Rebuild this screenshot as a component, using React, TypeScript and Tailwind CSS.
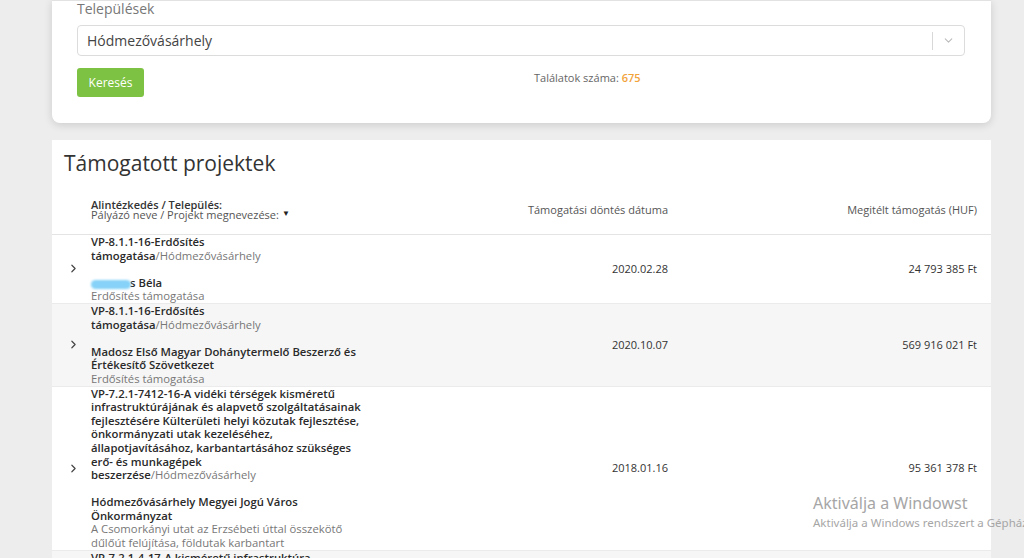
import React from 'react';
import { ChevronRight, ChevronDown } from 'lucide-react';

interface Project {
  title: string[];
  place: string;
  applicant: React.ReactNode[];
  description: string[];
  date: string;
  amount: string;
}

const projects: Project[] = [
  {
    title: ['VP-8.1.1-16-Erdősítés', 'támogatása'],
    place: 'Hódmezővásárhely',
    applicant: [
      <>
        <span className="inline-block w-[40px] h-[9px] -mb-[1px] rounded-full bg-[#86d2f8] blur-[1px] align-middle" />
        <span className="-ml-[1px]">s Béla</span>
      </>,
    ],
    description: ['Erdősítés támogatása'],
    date: '2020.02.28',
    amount: '24 793 385 Ft',
  },
  {
    title: ['VP-8.1.1-16-Erdősítés', 'támogatása'],
    place: 'Hódmezővásárhely',
    applicant: ['Madosz Első Magyar Dohánytermelő Beszerző és', 'Értékesítő Szövetkezet'],
    description: ['Erdősítés támogatása'],
    date: '2020.10.07',
    amount: '569 916 021 Ft',
  },
  {
    title: [
      'VP-7.2.1-7412-16-A vidéki térségek kisméretű',
      'infrastruktúrájának és alapvető szolgáltatásainak',
      'fejlesztésére Külterületi helyi közutak fejlesztése,',
      'önkormányzati utak kezeléséhez,',
      'állapotjavításához, karbantartásához szükséges',
      'erő- és munkagépek',
      'beszerzése',
    ],
    place: 'Hódmezővásárhely',
    applicant: ['Hódmezővásárhely Megyei Jogú Város', 'Önkormányzat'],
    description: ['A Csomorkányi utat az Erzsébeti úttal összekötő', 'dűlőút felújítása, földutak karbantart'],
    date: '2018.01.16',
    amount: '95 361 378 Ft',
  },
  {
    title: ['VP-7.2.1-4-17-A kisméretű infrastruktúra', 'fejlesztése'],
    place: 'Hódmezővásárhely',
    applicant: ['Hódmezővásárhely Megyei Jogú Város'],
    description: ['Önkormányzat'],
    date: '2018.05.22',
    amount: '12 400 000 Ft',
  },
];

const font = { fontFamily: '"Open Sans", "Liberation Sans", sans-serif' };

const ProjectRow: React.FC<{ project: Project; shaded: boolean }> = ({ project, shaded }) => {
  const last = project.title.length - 1;
  return (
    <div
      className={`grid grid-cols-[39px_290px_287px_309px] pr-[14px] border-b border-[#ebebeb] text-[11.3px] leading-[13.6px] ${
        shaded ? 'bg-[#f6f6f6]' : 'bg-white'
      }`}
    >
      <div className="flex items-center justify-center pl-[3px]">
        <ChevronRight className="w-[13px] h-[13px] text-[#444]" strokeWidth={2.2} />
      </div>
      <div className="whitespace-nowrap">
        {project.title.map((line, i) => (
          <div key={i} className="font-semibold text-[#2a2a2a]">
            {line}
            {i === last && <span className="font-normal text-[#777]">/{project.place}</span>}
          </div>
        ))}
        <div className="mt-[13.6px]">
          {project.applicant.map((line, i) => (
            <div key={i} className="font-semibold text-[#2a2a2a]">
              {line}
            </div>
          ))}
          {project.description.map((line, i) => (
            <div key={i} className="text-[#777]">
              {line}
            </div>
          ))}
        </div>
      </div>
      <div className="flex items-center justify-end text-[11px] text-[#333]">{project.date}</div>
      <div className="flex items-center justify-end text-[11px] text-[#333]">{project.amount}</div>
    </div>
  );
};

const App: React.FC = () => {
  return (
    <div className="relative h-[558px] overflow-hidden bg-[#ededed]" style={font}>
      <div className="ml-[52px] w-[939px] bg-white border-t border-[#e2e2e2] rounded-b-lg shadow-[0_2px_8px_rgba(0,0,0,0.14)] px-[25px] pb-[26px]">
        <div className="text-[14px] leading-[16px] text-[#777]">Települések</div>
        <div className="mt-[8px] h-[31px] w-[888px] flex items-center border border-[#dcdcdc] rounded-[4px] pl-[9px]">
          <span className="flex-1 text-[14px] text-[#444]">Hódmezővásárhely</span>
          <span className="w-px h-[18px] bg-[#d8d8d8]" />
          <span className="w-[31px] flex justify-center">
            <ChevronDown className="w-[13px] h-[13px] text-[#bbb]" strokeWidth={2} />
          </span>
        </div>
        <div className="mt-[12px] flex items-start">
          <button className="h-[29px] w-[67px] rounded-[3px] bg-[#7dc242] text-white text-[12px]">Keresés</button>
          <div className="ml-[390px] text-[11px] leading-[20px] text-[#666]">
            Találatok száma: <span className="font-semibold text-[#f2a33a]">675</span>
          </div>
        </div>
      </div>

      <div className="mt-[17px] ml-[52px] w-[939px] bg-white">
        <div className="pt-[9px] pl-[12px] text-[21px] leading-[28px] text-[#333]">Támogatott projektek</div>
        <div className="grid grid-cols-[39px_290px_287px_309px] pr-[14px] h-[58px] pt-[9px] border-b border-[#e4e4e4] text-[11px]">
          <div />
          <div className="flex items-center">
            <div className="leading-[10px] whitespace-nowrap">
              <div className="font-semibold text-[#333]">Alintézkedés / Település:</div>
              <div className="text-[#555]">
                Pályázó neve / Projekt megnevezése:
                <span className="ml-[3px] text-[8px] text-[#222] relative -top-[3px]">▼</span>
              </div>
            </div>
          </div>
          <div className="flex items-center justify-end text-[#555]">Támogatási döntés dátuma</div>
          <div className="flex items-center justify-end text-[#555]">Megitélt támogatás (HUF)</div>
        </div>
        {projects.map((p, i) => (
          <ProjectRow key={i} project={p} shaded={i % 2 === 1} />
        ))}
      </div>

      <div
        className="absolute left-[813px] top-[493px] whitespace-nowrap text-[#a6a6a6] pointer-events-none"
        style={{ fontFamily: '"Noto Sans", "Open Sans", sans-serif' }}
      >
        <div className="text-[16px] leading-[20px]">Aktiválja a Windowst</div>
        <div className="text-[11.5px] leading-[16px] mt-[2px]">Aktiválja a Windows rendszert a Gépház</div>
      </div>
    </div>
  );
};

export default App;
